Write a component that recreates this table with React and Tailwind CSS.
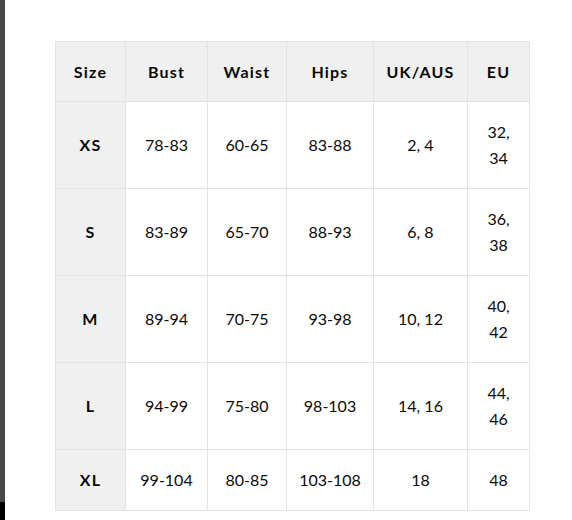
import React from "react";

const head = ["Size", "Bust", "Waist", "Hips", "UK/AUS", "EU"];
const rows = [
  ["XS", "78-83", "60-65", "83-88", "2, 4", "32, 34"],
  ["S", "83-89", "65-70", "88-93", "6, 8", "36, 38"],
  ["M", "89-94", "70-75", "93-98", "10, 12", "40, 42"],
  ["L", "94-99", "75-80", "98-103", "14, 16", "44, 46"],
  ["XL", "99-104", "80-85", "103-108", "18", "48"],
];
const widths = ["w-[70px]", "w-[82px]", "w-[79px]", "w-[87px]", "w-[94px]", "w-[62px]"];

export default function App() {
  return (
    <div className="flex h-[520px] w-[572px] overflow-hidden bg-white" style={{ fontFamily: "Lato, 'Open Sans', sans-serif" }}>
      <div className="flex w-[5px] shrink-0 flex-col bg-[#474747]">
        <div className="h-[502px]" />
        <div className="flex-1 bg-black" />
      </div>
      <div className="flex-1 pl-[50px] pt-[41px]">
        <table className="table-fixed border-collapse text-[16px] text-[#0a0a0a]">
          <thead>
            <tr className="h-[60px]">
              {head.map((h, i) => (
                <th key={h} className={`${widths[i]} border border-[#e3e3e3] bg-[#f0f0f0] p-0 text-center font-bold tracking-[1.2px]`}>
                  {h}
                </th>
              ))}
            </tr>
          </thead>
          <tbody>
            {rows.map((r, ri) => (
              <tr key={r[0]} className={ri === rows.length - 1 ? "h-[61px]" : "h-[87px]"}>
                {r.map((c, i) => (
                  <td
                    key={i}
                    className={`border border-[#e3e3e3] p-0 text-center leading-[26px] ${i === 0 ? "bg-[#f0f0f0] font-bold tracking-[1.2px]" : ""} ${i === 5 ? "px-[14px]" : ""}`}
                  >
                    {c}
                  </td>
                ))}
              </tr>
            ))}
          </tbody>
        </table>
      </div>
    </div>
  );
}
